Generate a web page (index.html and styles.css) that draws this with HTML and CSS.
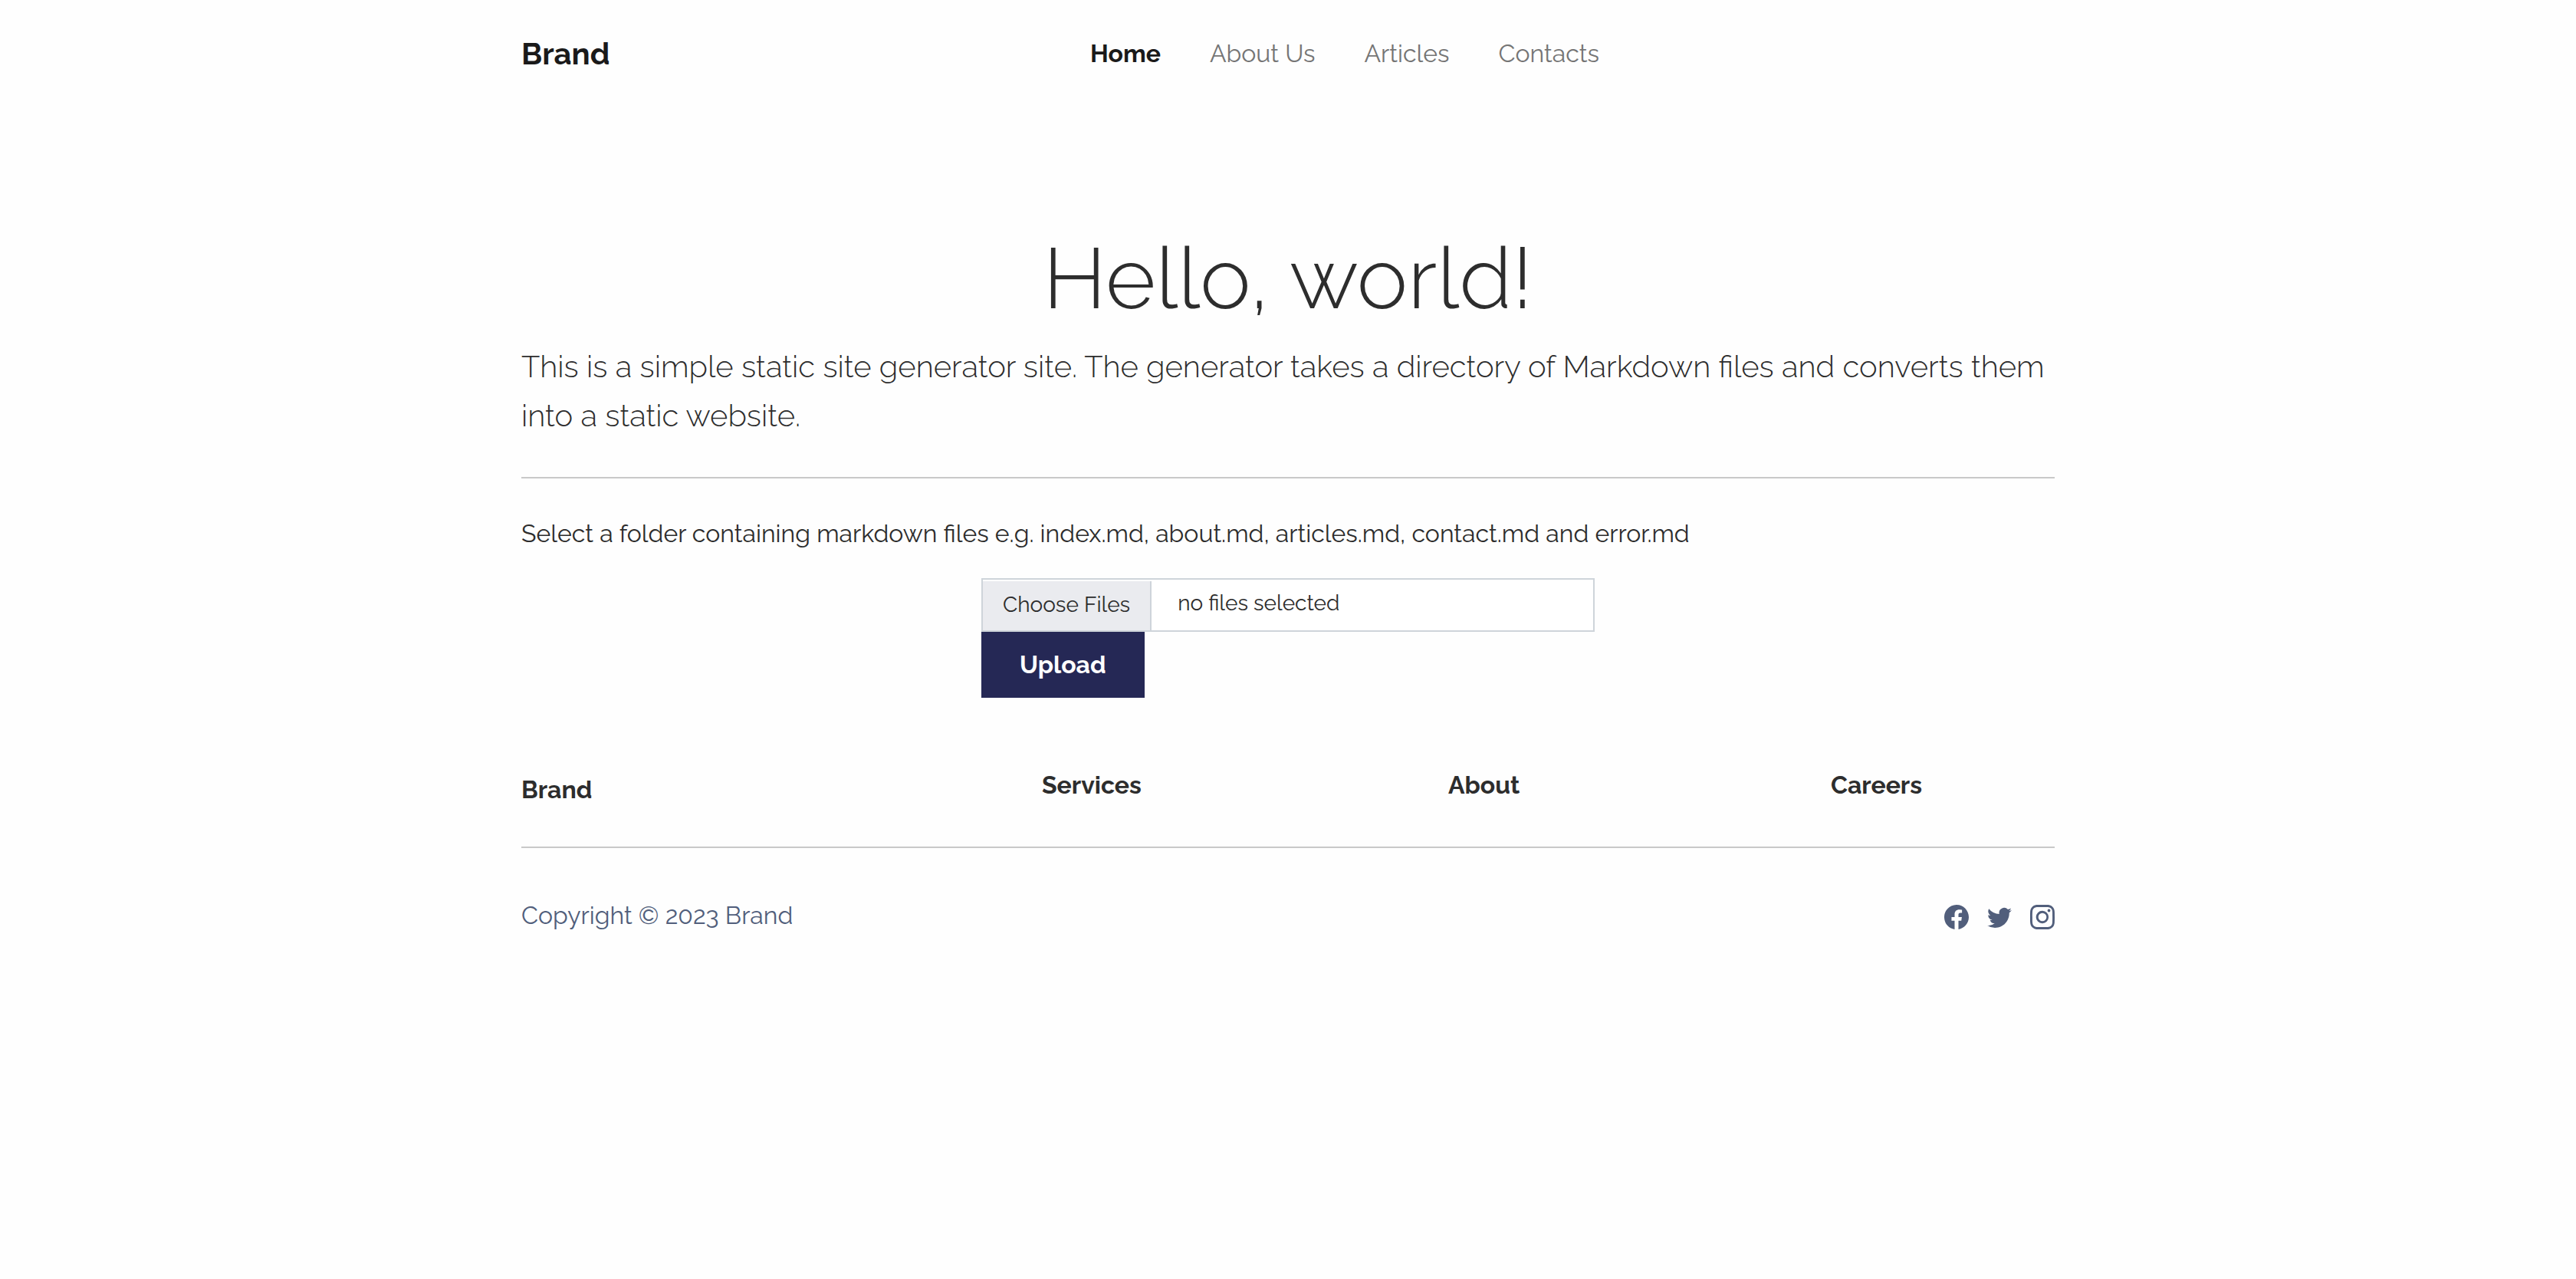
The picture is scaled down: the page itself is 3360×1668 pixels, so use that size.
FILE: index.html
```html
<!DOCTYPE html>
<html lang="en">
<head>
  <meta charset="utf-8">
  <meta name="viewport" content="width=device-width, initial-scale=1">
  <title>Brand</title>
  <link rel="stylesheet" href="styles.css">
</head>
<body>
  <header class="container site-header">
    <a class="brand" href="#">Brand</a>
    <nav class="nav" aria-label="Main">
      <a class="nav-link active" href="#" aria-current="page">Home</a>
      <a class="nav-link" href="#">About Us</a>
      <a class="nav-link" href="#">Articles</a>
      <a class="nav-link" href="#">Contacts</a>
    </nav>
  </header>

  <main class="container hero">
    <h1 class="title">Hello, world!</h1>
    <p class="lead">This is a simple static site generator site. The generator takes a directory of Markdown files and converts them into a static website.</p>
    <hr class="rule">
    <p class="hint">Select a folder containing markdown files e.g. index.md, about.md, articles.md, contact.md and error.md</p>
    <form class="upload">
      <label class="file">
        <input class="file-input" type="file" multiple>
        <span class="file-button">Choose Files</span>
        <span class="file-status">no files selected</span>
      </label>
      <button class="submit" type="button">Upload</button>
    </form>
  </main>

  <footer class="container site-footer">
    <div class="footer-columns">
      <div class="footer-brand">Brand</div>
      <h2 class="footer-heading">Services</h2>
      <h2 class="footer-heading">About</h2>
      <h2 class="footer-heading">Careers</h2>
    </div>
    <hr class="rule">
    <div class="footer-bottom">
      <p class="copyright">Copyright © 2023 Brand</p>
      <div class="social">
        <a class="social-link" href="#" aria-label="Facebook">
          <svg class="icon" viewBox="0 0 16 16" aria-hidden="true"><path d="M16 8.049c0-4.446-3.582-8.05-8-8.05C3.58 0-.002 3.603-.002 8.05c0 4.017 2.926 7.347 6.75 7.951v-5.625h-2.03V8.05H6.75V6.275c0-2.017 1.195-3.131 3.022-3.131.876 0 1.791.157 1.791.157v1.98h-1.009c-.993 0-1.303.621-1.303 1.258v1.51h2.218l-.354 2.326H9.25V16c3.824-.604 6.75-3.934 6.75-7.951z"/></svg>
        </a>
        <a class="social-link" href="#" aria-label="Twitter">
          <svg class="icon" viewBox="0 0 16 16" aria-hidden="true"><path d="M5.026 15c6.038 0 9.341-5.003 9.341-9.334 0-.14 0-.282-.006-.422A6.685 6.685 0 0 0 16 3.542a6.658 6.658 0 0 1-1.889.518 3.301 3.301 0 0 0 1.447-1.817 6.533 6.533 0 0 1-2.087.793A3.286 3.286 0 0 0 7.875 6.03a9.325 9.325 0 0 1-6.767-3.429 3.289 3.289 0 0 0 1.018 4.382A3.323 3.323 0 0 1 .64 6.575v.045a3.288 3.288 0 0 0 2.632 3.218 3.203 3.203 0 0 1-.865.115 3.23 3.23 0 0 1-.614-.057 3.283 3.283 0 0 0 3.067 2.277A6.588 6.588 0 0 1 .78 13.58a6.32 6.32 0 0 1-.78-.045A9.344 9.344 0 0 0 5.026 15z"/></svg>
        </a>
        <a class="social-link" href="#" aria-label="Instagram">
          <svg class="icon" viewBox="0 0 16 16" aria-hidden="true"><path d="M8 0C5.829 0 5.556.01 4.703.048 3.85.088 3.269.222 2.76.42a3.917 3.917 0 0 0-1.417.923A3.927 3.927 0 0 0 .42 2.76C.222 3.268.087 3.85.048 4.7.01 5.555 0 5.827 0 8.001c0 2.172.01 2.444.048 3.297.04.852.174 1.433.372 1.942.205.526.478.972.923 1.417.444.445.89.719 1.416.923.51.198 1.09.333 1.942.372C5.555 15.99 5.827 16 8 16s2.444-.01 3.298-.048c.851-.04 1.434-.174 1.943-.372a3.916 3.916 0 0 0 1.416-.923c.445-.445.718-.891.923-1.417.197-.509.332-1.09.372-1.942C15.99 10.445 16 10.173 16 8s-.01-2.445-.048-3.299c-.04-.851-.175-1.433-.372-1.941a3.926 3.926 0 0 0-.923-1.417A3.911 3.911 0 0 0 13.24.42c-.51-.198-1.092-.333-1.943-.372C10.443.01 10.172 0 7.998 0h.003zm-.717 1.442h.718c2.136 0 2.389.007 3.232.046.78.035 1.204.166 1.486.275.373.145.64.319.92.599.28.28.453.546.598.92.11.281.24.705.275 1.485.039.843.047 1.096.047 3.231s-.008 2.389-.047 3.232c-.035.78-.166 1.203-.275 1.485a2.47 2.47 0 0 1-.599.919c-.28.28-.546.453-.92.598-.28.11-.704.24-1.485.276-.843.038-1.096.047-3.232.047s-2.39-.009-3.233-.047c-.78-.036-1.203-.166-1.485-.276a2.478 2.478 0 0 1-.92-.598 2.48 2.48 0 0 1-.6-.92c-.109-.281-.24-.705-.275-1.485-.038-.843-.046-1.096-.046-3.233 0-2.136.008-2.388.046-3.231.036-.78.166-1.204.276-1.486.145-.373.319-.64.599-.92.28-.28.546-.453.92-.598.282-.11.705-.24 1.485-.276.738-.034 1.024-.044 2.515-.045v.002zm4.988 1.328a.96.96 0 1 0 0 1.92.96.96 0 0 0 0-1.92zm-4.27 1.122a4.109 4.109 0 1 0 0 8.217 4.109 4.109 0 0 0 0-8.217zm0 1.441a2.667 2.667 0 1 1 0 5.334 2.667 2.667 0 0 1 0-5.334z"/></svg>
        </a>
      </div>
    </div>
  </footer>
</body>
</html>
```
FILE: styles.css
```css
*,
*::before,
*::after {
  box-sizing: border-box;
}

body {
  margin: 0;
  background: #fefefe;
  color: #2d2d2d;
  font-family: Raleway, Lato, sans-serif;
  font-size: 32px;
  line-height: 48px;
}

a {
  color: inherit;
  text-decoration: none;
}

h1,
h2,
p {
  margin: 0;
}

.container {
  width: 100%;
  max-width: 2048px;
  margin: 0 auto;
  padding: 0 24px;
}

.site-header {
  display: grid;
  grid-template-columns: 742fr 1258fr;
  align-items: center;
  padding-top: 40px;
}

.brand {
  color: #1a1a1a;
  font-size: 40px;
  font-weight: 700;
  line-height: 60px;
}

.nav {
  display: flex;
  gap: 64px;
}

.nav-link {
  color: #757575;
}

.nav-link.active {
  color: #1a1a1a;
  font-weight: 700;
}

.hero {
  padding-top: 196px;
}

.title {
  font-size: 112px;
  font-weight: 300;
  line-height: 134px;
  text-align: center;
}

.lead {
  margin-top: 16px;
  font-size: 40px;
  font-weight: 300;
  line-height: 64px;
}

.rule {
  height: 2px;
  margin: 0;
  border: 0;
  background: #c9c9c9;
}

.hero .rule {
  margin: 48px 0 46px;
}

.hint {
  line-height: 52px;
}

.upload {
  width: 40%;
  margin: 32px auto 0;
}

.file {
  display: flex;
  height: 70px;
  border: 2px solid #ced4da;
  background: #fff;
  font-size: 28px;
  line-height: 42px;
}

.file-input {
  width: 1px;
  height: 1px;
  margin: 0 -1px 0 0;
  opacity: 0;
}

.file-button {
  margin-top: 2px;
  padding: 10px 26px 0;
  border-right: 2px solid #ced4da;
  background: #eaebef;
}

.file-status {
  padding: 10px 34px 0;
}

.submit {
  display: block;
  padding: 19px 50px;
  border: 0;
  background: #252855;
  color: #fff;
  font: inherit;
  font-weight: 700;
}

.site-footer {
  padding-top: 90px;
}

.footer-columns {
  display: grid;
  grid-template-columns: 679fr 530fr 499fr 292fr;
  padding-bottom: 50px;
}

.footer-brand,
.footer-heading {
  font-size: 32px;
  font-weight: 700;
  line-height: 48px;
}

.footer-brand {
  padding-top: 6px;
}

.footer-bottom {
  display: flex;
  align-items: flex-start;
  justify-content: space-between;
  padding-top: 64px;
  color: #515e7b;
}

.copyright {
  font-variant-numeric: oldstyle-nums;
}

.social {
  display: flex;
  gap: 24px;
  padding-top: 10px;
}

.social-link,
.icon {
  display: block;
  width: 32px;
  height: 32px;
}

.icon {
  fill: currentColor;
}
```
